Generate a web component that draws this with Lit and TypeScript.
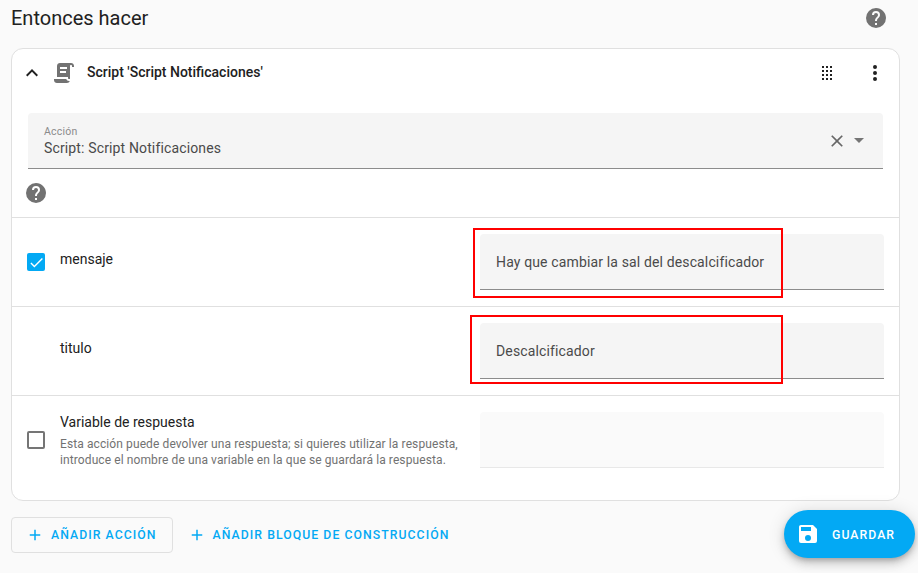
import { LitElement, html, css, svg } from "lit";
import { customElement } from "lit/decorators.js";

const P = {
  help: "M15.07,11.25L14.17,12.17C13.45,12.89 13,13.5 13,15H11V14.5C11,13.39 11.45,12.39 12.17,11.67L13.41,10.41C13.78,10.05 14,9.55 14,9C14,7.89 13.1,7 12,7A2,2 0 0,0 10,9H8A4,4 0 0,1 12,5A4,4 0 0,1 16,9C16,9.88 15.64,10.67 15.07,11.25M13,19H11V17H13M12,2A10,10 0 0,0 2,12A10,10 0 0,0 12,22A10,10 0 0,0 22,12C22,6.47 17.5,2 12,2Z",
  chevron: "M7.41,15.41L12,10.83L16.59,15.41L18,14L12,8L6,14L7.41,15.41Z",
  script: "M17.8,20C17.4,21.2 16.3,22 15,22H5C3.3,22 2,20.7 2,19V18H5L14.2,18C14.6,19.2 15.7,20 17,20H17.8M19,2C20.7,2 22,3.3 22,5V6H20V5C20,4.4 19.6,4 19,4C18.4,4 18,4.4 18,5V18H17C16.4,18 16,17.6 16,17V16H5V5C5,3.3 6.3,2 8,2H19M8,6V8H15V6H8M8,10V12H14V10H8Z",
  dots: "M12,16A2,2 0 0,1 14,18A2,2 0 0,1 12,20A2,2 0 0,1 10,18A2,2 0 0,1 12,16M12,10A2,2 0 0,1 14,12A2,2 0 0,1 12,14A2,2 0 0,1 10,12A2,2 0 0,1 12,10M12,4A2,2 0 0,1 14,6A2,2 0 0,1 12,8A2,2 0 0,1 10,6A2,2 0 0,1 12,4Z",
  drag: "M7,19V17H9V19H7M11,19V17H13V19H11M15,19V17H17V19H15M7,15V13H9V15H7M11,15V13H13V15H11M15,15V13H17V15H15M7,11V9H9V11H7M11,11V9H13V11H11M15,11V9H17V11H15M7,7V5H9V7H7M11,7V5H13V7H11M15,7V5H17V7H15Z",
  close: "M19,6.41L17.59,5L12,10.59L6.41,5L5,6.41L10.59,12L5,17.59L6.41,19L12,13.41L17.59,19L19,17.59L13.41,12L19,6.41Z",
  save: "M15,9H5V5H15M12,19A3,3 0 0,1 9,16A3,3 0 0,1 12,13A3,3 0 0,1 15,16A3,3 0 0,1 12,19M17,3H5C3.89,3 3,3.9 3,5V19A2,2 0 0,0 5,21H19A2,2 0 0,0 21,19V7L17,3Z",
  plus: "M19,13H13V19H11V13H5V11H11V5H13V11H19V13Z",
  check: "M9,16.17L4.83,12L3.41,13.41L9,19L21,7L19.59,5.59L9,16.17Z",
};

const icon = (d: string, size: number, cls = "") =>
  html`<svg class="icon ${cls}" width=${size} height=${size} viewBox="0 0 24 24">${svg`<path d=${d}></path>`}</svg>`;

@customElement("app-root")
export class AppRoot extends LitElement {
  static styles = css`
    :host {
      display: block;
      position: relative;
      width: 918px;
      height: 573px;
      overflow: hidden;
      background: #fafafa;
      font-family: Roboto, sans-serif;
      color: #212121;
    }
    .icon { display: block; flex: none; fill: currentColor; }
    .page { display: flex; flex-direction: column; padding: 0 18px 0 11px; }
    .head { display: flex; align-items: center; justify-content: space-between; height: 36px; margin-bottom: 12px; padding-right: 12px; }
    .head h1 { margin: 0; font-size: 20px; font-weight: 400; line-height: 36px; color: #212121; }
    .grey { color: #727272; }
    .card { box-sizing: border-box; height: 453px; background: #fff; border: 1px solid #e0e0e0; border-radius: 12px; }
    .card-head { display: flex; align-items: center; height: 48px; padding: 0 12px 0 8px; }
    .chev { margin-right: 8px; color: #212121; }
    .title { margin: 0 0 2px 11px; flex: 1; font-size: 14px; font-weight: 500; color: #212121; }
    .drag { margin-right: 24px; color: #212121; }
    .select-wrap { padding: 16px 16px 0; }
    .select { box-sizing: border-box; height: 56px; display: flex; align-items: center; background: #f5f5f5; border-bottom: 1px solid #8c8c8c; border-radius: 4px 4px 0 0; padding: 0 12px 0 16px; }
    .select-text { flex: 1; display: flex; flex-direction: column; padding: 2px 0 1px; }
    .select-label { font-size: 10.5px; line-height: 14px; color: #8a8a8a; letter-spacing: 0.2px; }
    .select-value { margin-top: -1px; font-size: 14px; line-height: 20px; color: #4a4a4a; letter-spacing: 0.14px; }
    .clear { color: #666; }
    .arrow { width: 0; height: 0; margin: 0 7px; border-left: 5px solid transparent; border-right: 5px solid transparent; border-top: 5px solid #757575; }
    .help-line { padding: 12px; height: 24px; }
    .row { display: flex; align-items: center; border-top: 1px solid #e0e0e0; padding: 16px 15px; }
    .box { box-sizing: border-box; width: 18px; height: 18px; flex: none; border-radius: 2px; margin-right: 15px; display: flex; align-items: center; justify-content: center; }
    .box.on { background: #03a9f4; color: #fff; }
    .box.off { border: 2px solid #757575; }
    .label { flex: 1; min-width: 0; font-size: 14px; line-height: 20px; color: #212121; }
    .label.short { padding-bottom: 6px; }
    .desc { margin-top: 4px; font-size: 12px; line-height: 16px; color: #727272; letter-spacing: 0.1px; white-space: nowrap; }
    .field { box-sizing: border-box; width: 404px; height: 56px; flex: none; display: flex; align-items: center; padding: 0 16px; margin-left: 20px; background: #f5f5f5; border-bottom: 1px solid #8c8c8c; border-radius: 4px 4px 0 0; font-size: 14px; letter-spacing: 0.14px; color: #4a4a4a; }
    .field.empty { border-bottom-color: #e8e8e8; background: #fafafa; }
    .actions { display: flex; align-items: center; margin-top: 16px; }
    .btn { box-sizing: border-box; height: 36px; display: flex; align-items: center; gap: 7px; font-size: 12.25px; font-weight: 500; letter-spacing: 1.05px; color: #03a9f4; }
    .btn.outline { border: 1px solid #e0e0e0; border-radius: 4px; padding: 0 15px 0 14px; margin-right: 15px; }
    .fab { position: absolute; left: 784px; top: 510px; width: 131px; height: 48px; box-sizing: border-box; border-radius: 24px; display: flex; align-items: center; padding-left: 12px; gap: 12px; background: #03a9f4; color: #fff; font-size: 12.25px; font-weight: 500; letter-spacing: 1.05px; box-shadow: 0 3px 5px -1px rgba(0,0,0,.2), 0 6px 10px 0 rgba(0,0,0,.14), 0 1px 18px 0 rgba(0,0,0,.12); }
    .fab span { padding-top: 2px; }
    .mark { position: absolute; box-sizing: border-box; border: 2px solid #f00; }
    .m1 { left: 473px; top: 228px; width: 310px; height: 70px; }
    .m2 { left: 470px; top: 315px; width: 313px; height: 69px; }
  `;

  render() {
    return html`
      <div class="page">
        <div class="head">
          <h1>Entonces hacer</h1>
          ${icon(P.help, 24, "grey")}
        </div>
        <div class="card">
          <div class="card-head">
            ${icon(P.chevron, 24, "chev")}
            ${icon(P.script, 24, "grey")}
            <div class="title">Script 'Script Notificaciones'</div>
            ${icon(P.drag, 24, "drag")}
            ${icon(P.dots, 24)}
          </div>
          <div class="select-wrap">
            <div class="select">
              <div class="select-text">
                <span class="select-label">Acción</span>
                <span class="select-value">Script: Script Notificaciones</span>
              </div>
              ${icon(P.close, 20, "clear")}
              <span class="arrow"></span>
            </div>
          </div>
          <div class="help-line">${icon(P.help, 24, "grey")}</div>
          <div class="row">
            <span class="box on">${icon(P.check, 17)}</span>
            <div class="label short">mensaje</div>
            <div class="field">Hay que cambiar la sal del descalcificador</div>
          </div>
          <div class="row">
            <span class="box"></span>
            <div class="label short">titulo</div>
            <div class="field">Descalcificador</div>
          </div>
          <div class="row">
            <span class="box off"></span>
            <div class="label">
              Variable de respuesta
              <div class="desc">Esta acción puede devolver una respuesta; si quieres utilizar la respuesta,<br />introduce el nombre de una variable en la que se guardará la respuesta.</div>
            </div>
            <div class="field empty"></div>
          </div>
        </div>
        <div class="actions">
          <div class="btn outline">${icon(P.plus, 18)}AÑADIR ACCIÓN</div>
          <div class="btn">${icon(P.plus, 18)}AÑADIR BLOQUE DE CONSTRUCCIÓN</div>
        </div>
      </div>
      <div class="fab">${icon(P.save, 24)}<span>GUARDAR</span></div>
      <div class="mark m1"></div>
      <div class="mark m2"></div>
    `;
  }
}
